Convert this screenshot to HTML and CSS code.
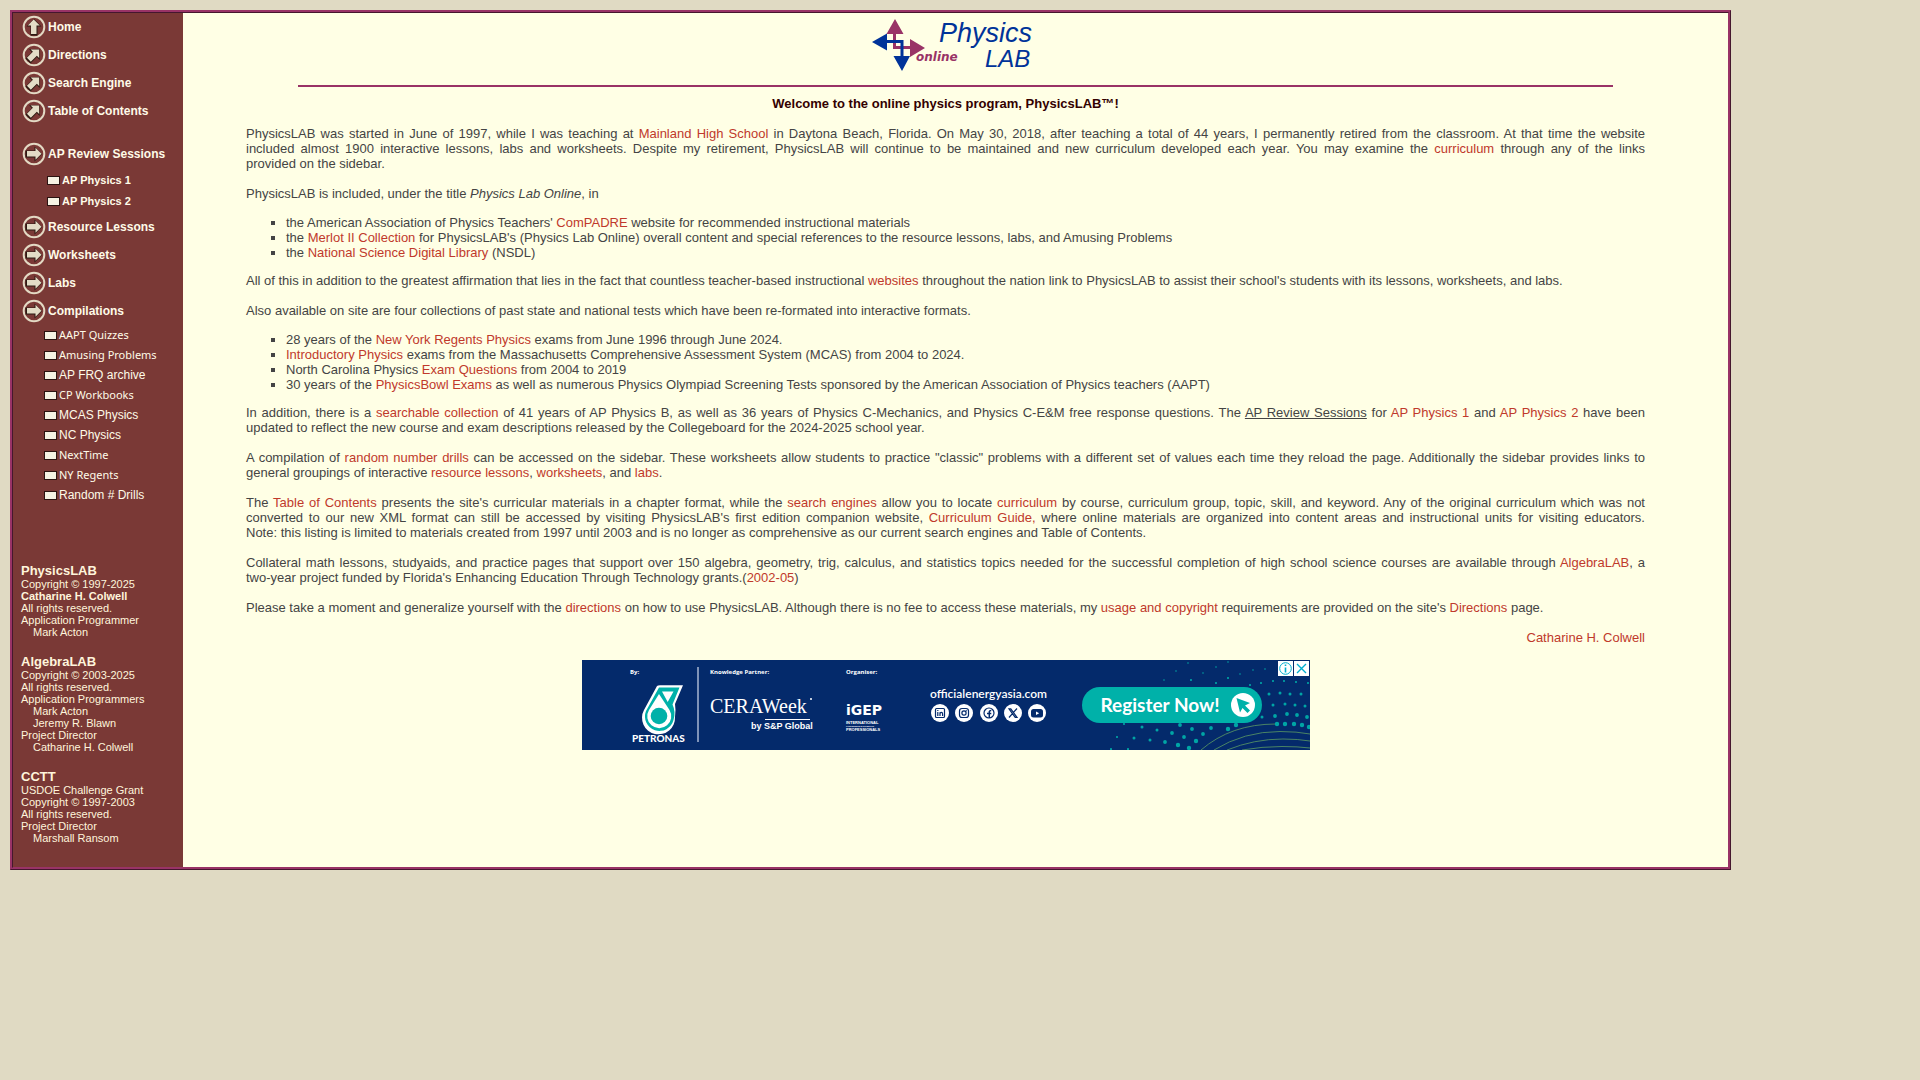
FILE: index.html
```html
<!DOCTYPE html>
<html lang="en">
<head>
<meta charset="utf-8">
<title>PhysicsLAB Online</title>
<link rel="stylesheet" href="styles.css">
</head>
<body>
<svg class="defs" width="0" height="0" aria-hidden="true">
  <symbol id="ring-arrow" viewBox="0 0 24 24">
    <path d="M3.500 8.500H12.500V4.500L20 12L12.500 19.500V15.500H3.500Z" fill="#2b1a12"/>
    <path d="M5 9H13.500V5.800L19.500 11.700L13.500 17.800V14.500H5Z" fill="#e3dcc6"/>
  </symbol>
</svg>
<div class="frame">
  <aside class="sidebar">
    <nav>
      <ul class="menu">
        <li><a href="#"><svg class="ico" viewBox="0 0 24 24"><circle cx="12" cy="12" r="10.300"/><use href="#ring-arrow" transform="rotate(-90 12 12)"/></svg>Home</a></li>
        <li><a href="#"><svg class="ico" viewBox="0 0 24 24"><circle cx="12" cy="12" r="10.300"/><use href="#ring-arrow" transform="rotate(-45 12 12)"/></svg>Directions</a></li>
        <li><a href="#"><svg class="ico" viewBox="0 0 24 24"><circle cx="12" cy="12" r="10.300"/><use href="#ring-arrow" transform="rotate(-45 12 12)"/></svg>Search Engine</a></li>
        <li><a href="#"><svg class="ico" viewBox="0 0 24 24"><circle cx="12" cy="12" r="10.300"/><use href="#ring-arrow" transform="rotate(-45 12 12)"/></svg>Table of Contents</a></li>
      </ul>
      <ul class="menu sections">
        <li><a href="#"><svg class="ico" viewBox="0 0 24 24"><circle cx="12" cy="12" r="10.300"/><use href="#ring-arrow"/></svg>AP Review Sessions</a>
          <ul class="sub courses">
            <li><a href="#">AP Physics 1</a></li>
            <li><a href="#">AP Physics 2</a></li>
          </ul>
        </li>
        <li><a href="#"><svg class="ico" viewBox="0 0 24 24"><circle cx="12" cy="12" r="10.300"/><use href="#ring-arrow"/></svg>Resource Lessons</a></li>
        <li><a href="#"><svg class="ico" viewBox="0 0 24 24"><circle cx="12" cy="12" r="10.300"/><use href="#ring-arrow"/></svg>Worksheets</a></li>
        <li><a href="#"><svg class="ico" viewBox="0 0 24 24"><circle cx="12" cy="12" r="10.300"/><use href="#ring-arrow"/></svg>Labs</a></li>
        <li><a href="#"><svg class="ico" viewBox="0 0 24 24"><circle cx="12" cy="12" r="10.300"/><use href="#ring-arrow"/></svg>Compilations</a>
          <ul class="sub">
            <li><a href="#">AAPT Quizzes</a></li>
            <li><a href="#">Amusing Problems</a></li>
            <li><a href="#" class="alt">AP FRQ archive</a></li>
            <li><a href="#">CP Workbooks</a></li>
            <li><a href="#" class="alt">MCAS Physics</a></li>
            <li><a href="#" class="alt">NC Physics</a></li>
            <li><a href="#">NextTime</a></li>
            <li><a href="#">NY Regents</a></li>
            <li><a href="#" class="alt">Random # Drills</a></li>
          </ul>
        </li>
      </ul>
    </nav>
    <div class="credits">
      <section>
        <h2>PhysicsLAB</h2>
        <p>Copyright © 1997-2025</p>
        <p><b>Catharine H. Colwell</b></p>
        <p>All rights reserved.</p>
        <p>Application Programmer</p>
        <p class="person">Mark Acton</p>
      </section>
      <section>
        <h2>AlgebraLAB</h2>
        <p>Copyright © 2003-2025</p>
        <p>All rights reserved.</p>
        <p>Application Programmers</p>
        <p class="person">Mark Acton</p>
        <p class="person">Jeremy R. Blawn</p>
        <p>Project Director</p>
        <p class="person">Catharine H. Colwell</p>
      </section>
      <section>
        <h2>CCTT</h2>
        <p>USDOE Challenge Grant</p>
        <p>Copyright © 1997-2003</p>
        <p>All rights reserved.</p>
        <p>Project Director</p>
        <p class="person">Marshall Ransom</p>
      </section>
    </div>
  </aside>
  <main>
    <header>
      <svg class="logo" viewBox="871 13 169 72" role="img" aria-label="PhysicsLAB online">
        <path d="M894.500 34V47.500H911" fill="none" stroke="#993366" stroke-width="3"/>
        <path d="M887 41.500H902V57" fill="none" stroke="#003399" stroke-width="3"/>
        <path d="M895 19L903.500 34H886.500ZM910 39L925 48L910 57Z" fill="#993366"/>
        <path d="M872 42L887 33.500V50.500ZM893.500 56H910L902 71Z" fill="#003399"/>
        <text x="939" y="42" class="logo-a">Physics</text>
        <text x="985" y="67" class="logo-b">LAB</text>
        <text x="916" y="61" class="logo-c">online</text>
      </svg>
      <hr>
    </header>
    <article>
      <h1>Welcome to the online physics program, PhysicsLAB™!</h1>
      <p>PhysicsLAB was started in June of 1997, while I was teaching at <a href="#">Mainland High School</a> in Daytona Beach, Florida. On May 30, 2018, after teaching a total of 44 years, I permanently retired from the classroom. At that time the website included&nbsp;almost 1900 interactive lessons, labs and worksheets. Despite my retirement, PhysicsLAB will continue to be maintained and new curriculum developed each year. You may examine the <a href="#">curriculum</a> through any of the links <span class="keep">provided on the sidebar.</span></p>
      <p>PhysicsLAB is included, under the title <i>Physics Lab Online</i>, in</p>
      <ul>
        <li>the American Association of Physics Teachers' <a href="#">ComPADRE</a> website for recommended instructional materials</li>
        <li>the <a href="#">Merlot II Collection</a> for PhysicsLAB's (Physics Lab Online) overall content and special references to the resource lessons, labs, and Amusing Problems</li>
        <li>the <a href="#">National Science Digital Library</a> (NSDL)</li>
      </ul>
      <p>All of this in addition to the greatest affirmation that lies in the fact that countless teacher-based instructional <a href="#">websites</a> throughout the nation link to PhysicsLAB to assist their school's students with its lessons, worksheets, and labs.</p>
      <p>Also available on site are four collections of past state and national tests which have been re-formated into interactive formats.</p>
      <ul>
        <li>28 years of the <a href="#">New York Regents Physics</a> exams from June 1996 through June 2024.</li>
        <li><a href="#">Introductory Physics</a> exams from the Massachusetts Comprehensive Assessment System (MCAS) from 2004 to 2024.</li>
        <li>North Carolina Physics <a href="#">Exam Questions</a> from 2004 to 2019</li>
        <li>30 years of the <a href="#">PhysicsBowl Exams</a> as well as numerous Physics Olympiad Screening Tests sponsored by the American Association of Physics teachers (AAPT)</li>
      </ul>
      <p>In addition, there is a <a href="#">searchable collection</a> of 41 years of AP Physics B, as well as 36 years of Physics C-Mechanics, and Physics C-E&amp;M free response questions. The <u>AP Review Sessions</u> for <a href="#">AP Physics 1</a> and <a href="#">AP Physics 2</a> have been updated to reflect the new course and exam descriptions released by the Collegeboard for the 2024-2025 school year.</p>
      <p>A compilation of <a href="#">random number drills</a> can be accessed on the sidebar. These worksheets allow students to practice "classic" problems with a different set of values each time they reload the page. Additionally the sidebar provides links to general groupings of interactive <a href="#">resource lessons</a>, <a href="#">worksheets</a>, and <a href="#">labs</a>.</p>
      <p>The <a href="#">Table of Contents</a> presents the site's curricular materials in a chapter format, while the <a href="#">search engines</a> allow you to locate <a href="#">curriculum</a> by course, curriculum group, topic, skill, and keyword. Any of the original curriculum which was not converted to our new XML format can still be accessed by visiting PhysicsLAB's first edition companion website, <a href="#">Curriculum Guide,</a> where online materials are organized into content areas and instructional units for visiting educators. <span class="keep">Note: this listing is limited</span> to materials created from 1997 until 2003 and is no longer as comprehensive as our current search engines and Table of Contents.</p>
      <p>Collateral math lessons, studyaids, and practice pages that support over 150 algebra, geometry, trig, calculus, and statistics topics needed for the successful completion of high school science courses are available through <a href="#">AlgebraLAB</a>, a <span class="keep">two-year project</span> funded by Florida's Enhancing Education Through Technology grants.(<a href="#">2002-05</a>)</p>
      <p>Please take a moment and generalize yourself with the <a href="#">directions</a> on how to use PhysicsLAB. Although there is no fee to access these materials, my <a href="#">usage and copyright</a> requirements are provided on the site's <a href="#">Directions</a> page.</p>
      <p class="signature"><a href="#">Catharine H. Colwell</a></p>
      <div class="ad">
        <svg class="ad-art" viewBox="0 0 728 90" role="img" aria-label="Energy Asia advertisement">
          <rect width="728" height="90" fill="#042a6b"/>
          <g fill="#fff">
            <g class="ad-tiny">
              <text x="48" y="14">By:</text>
              <text x="128" y="14">Knowledge Partner:</text>
              <text x="264" y="14">Organiser:</text>
            </g>
            <rect x="115" y="7" width="2" height="75" fill="#7f93b8"/>
            <path d="M75 26Q76 25 79 25.200H101L93 44Q94 50 93 57A16.500 16.500 0 1 1 62 50Z"/>
            <path d="M77 27.500H97.500L90.500 44.500Q94 52 91.500 60A14.500 14.500 0 1 1 64 51Z" fill="#00b1a9"/>
            <path d="M77 34L87.500 50A12 12 0 1 1 67 50ZM80 31.500H91.500L85.700 42Z"/>
            <circle cx="77" cy="56" r="8.300" fill="#00b1a9"/>
            <text x="50" y="82" class="ad-petronas">PETRONAS</text>
            <text x="128" y="53" class="ad-cera">CERAWeek</text>
            <circle cx="229" cy="39" r="1"/>
            <rect x="183" y="59" width="45" height="1"/>
            <text x="169" y="69" class="ad-sp">by S&amp;P Global</text>
            <text x="264" y="55" class="ad-igep">iGEP</text>
            <g class="ad-micro">
              <text x="264" y="64">INTERNATIONAL</text>
              <text x="264" y="71">PROFESSIONALS</text>
              <text x="264" y="67" class="ad-mid">CONFERENCE &amp; EXHIBITION</text>
            </g>
            <text x="348" y="38" class="ad-url">officialenergyasia.com</text>
            <circle cx="358" cy="53" r="9"/><circle cx="382" cy="53" r="9"/><circle cx="407" cy="53" r="9"/><circle cx="431" cy="53" r="9"/><circle cx="455" cy="53" r="9"/>
          </g>
          <g fill="none" stroke="#042a6b" stroke-width="1.200">
            <rect x="353.500" y="48.500" width="9" height="9" rx="1"/>
            <path d="M355.800 52V56M358 56V52.200M358 54Q358 52.300 359.300 52.300T360.600 54V56M355.800 50V51"/>
            <rect x="377.500" y="48.500" width="9" height="9" rx="2.500"/><circle cx="382" cy="53" r="2.100"/><path d="M384.300 50.300V51.300"/>
            <circle cx="407" cy="53" r="5"/>
            <path d="M407.300 58V51.800Q407.300 50.500 409.300 50.600M405 53.600H409.300" stroke-width="1.500"/>
            <path d="M427 48.800H428.800L435 57.300H433.200ZM435 48.500L431.700 52.200M430.200 53.800L427 57.500"/>
          </g>
          <rect x="449" y="49" width="12" height="8.500" rx="2.500" fill="#042a6b"/>
          <path d="M454 51.500L457.200 53.200L454 55Z" fill="#fff"/>
          <g fill="none" stroke="#5c9a63" stroke-width=".8">
            <path d="M619 90Q649 64 694 64"/>
            <path d="M632 90Q662 71.500 698 71.500Q715 71.500 728 74"/>
            <path d="M645 90Q672 79 701 79Q716 79 728 81"/>
            <path d="M660 90Q680 86.500 700 86.500Q716 86.500 728 88"/>
          </g>
          <g fill="none" stroke="#00a5a5" stroke-linecap="round">
            <path stroke-width="1.600" d="M606 3h0M634 7h0M646 2h0M594 11h0M621 13h0M658 14h0M582 20h0M671 10h0M683 9h0"/>
            <path stroke-width="2.200" d="M609 20h0M634 23h0M646 18h0M668 25h0M679 23h0M691 21h0M702 21h0M714 22h0M726 23h0M542 64h0M535 77h0M546 89h0M529 89h0"/>
            <path stroke-width="3" d="M687 34h0M698 33h0M708 34h0M719 34h0M691 45h0M703 44h0M713 45h0M723 46h0M680 57h0M560 67h0M575 70h0M552 78h0M568 80h0"/>
            <path stroke-width="3.800" d="M693 56h0M705 54h0M715 55h0M725 57h0M598 65h0M610 69h0M590 73h0M602 77h0M583 82h0M621 74h0M629 68h0"/>
            <path stroke-width="4.400" d="M614 81h0M596 85h0M607 88h0M646 69h0M654 65h0M695 64h0M703 64h0M712 64h0M720 65h0M727 67h0"/>
          </g>
        </svg>
        <a class="register" href="#">Register Now!
          <svg viewBox="0 0 24 24" width="24" height="24"><circle cx="12" cy="12" r="12" fill="#fff"/><path d="M5.500 5L19 10L14 12.500L19 17.500L16.500 20L11.500 15L9 19.500Z" fill="#00b1a9"/></svg>
        </a>
        <div class="ad-tools">
          <button type="button" aria-label="Ad information"><svg viewBox="0 0 15 15"><circle cx="7.500" cy="7.500" r="5.800"/><path d="M7.500 6.500V11.500M7.500 3.500V5" stroke-width="1.600"/></svg></button>
          <button type="button" aria-label="Close ad"><svg viewBox="0 0 15 15"><path d="M3 3L12 12M12 3L3 12" stroke-width="1.400"/></svg></button>
        </div>
      </div>
    </article>
  </main>
</div>
</body>
</html>
```
FILE: styles.css
```css
* { box-sizing: border-box; }

body {
  margin: 0;
  padding: 10px 0 10px 10px;
  background: #e0dac3;
  color: #444;
  font: 13px/15px "Liberation Sans", Arial, sans-serif;
}

ul, p, h1, h2 { margin: 0; padding: 0; }
a { color: #c0392b; text-decoration: none; }
.defs { position: absolute; }
.keep { white-space: nowrap; }

.frame {
  display: flex;
  width: calc(90% + 2px);
  border: 3px ridge #993366;
  background: #ffffe5;
}

/* Sidebar */
.sidebar {
  flex: 0 0 170px;
  padding-bottom: 23px;
  background: #7a3936;
  color: #fff5dc;
}
.sidebar ul { list-style: none; }
.sidebar a { color: #fffbe8; }
.menu > li > a {
  display: flex;
  align-items: center;
  gap: 2px;
  height: 28px;
  padding-left: 9px;
  font-size: 12px;
  font-weight: bold;
}
.sections { margin-top: 15px; }
.ico { width: 24px; height: 24px; flex: none; }
.ico circle { fill: none; stroke: #e3d9c4; stroke-width: 2; }

.sub a {
  display: flex;
  align-items: center;
  gap: 2px;
  height: 20px;
  padding-left: 31px;
  font: 11px/20px "Noto Sans", sans-serif;
}
.sub a::before {
  content: "";
  width: 11px;
  height: 7px;
  border: 1px solid #2b1412;
  background: #f6f3e4;
}
.sub .alt { font: 12px/20px "Liberation Sans", Arial, sans-serif; }
.courses { padding: 2px 0 1px; }
.courses a {
  height: 21px;
  padding-left: 34px;
  font: bold 11px/21px "Liberation Sans", Arial, sans-serif;
}

.credits {
  display: grid;
  gap: 16px;
  margin-top: 58px;
  padding-left: 8px;
  font-size: 11px;
  line-height: 12px;
}
.credits h2 { font-size: 13px; line-height: 15px; }
.credits .person { padding-left: 12px; }

/* Content */
main { flex: 1; min-width: 0; }
.logo { display: block; width: 169px; height: 72px; margin: 0 auto; }
.logo-a, .logo-b { font-style: italic; fill: #003399; }
.logo-a { font-size: 27px; }
.logo-b { font-size: 24px; }
.logo-c { font: italic bold 12px "DejaVu Sans", sans-serif; fill: #993366; }
hr {
  width: calc(85% + 2px);
  height: 2px;
  margin: 0 auto;
  border: 0;
  background: #993366;
}

article { padding: 9px 83px 0 63px; }
h1 {
  margin-bottom: 15px;
  color: #330000;
  font-size: 13px;
  line-height: 15px;
  text-align: center;
}
article p { margin-bottom: 15px; text-align: justify; }
article ul {
  margin: 0 0 13px;
  padding-left: 40px;
  list-style: square;
}
article p:has(+ ul) { margin-bottom: 14px; }
article .signature { text-align: right; }

/* Banner */
.ad { position: relative; width: 728px; max-width: 100%; margin: 0 auto; }
.ad-art { display: block; width: 100%; }
.ad-tiny { font: bold 6px "Open Sans", sans-serif; }
.ad-petronas { font: 900 10px Lato, sans-serif; }
.ad-cera { font: 20px "Liberation Serif", serif; }
.ad-sp { font: bold 9px "Liberation Sans", sans-serif; }
.ad-igep { font: bold 14px "DejaVu Sans", sans-serif; }
.ad-micro { font: bold 4px "Liberation Sans", sans-serif; }
.ad-mid { font-size: 2px; }
.ad-url { font: 600 12px Lato, sans-serif; }
.register {
  position: absolute;
  top: 27px;
  left: 500px;
  display: flex;
  align-items: center;
  justify-content: space-between;
  width: 180px;
  height: 36px;
  padding: 0 7px 0 19px;
  border-radius: 18px;
  background: #00b1a9;
  color: #fff;
  font: bold 19px/36px Lato, sans-serif;
}
.ad-tools { position: absolute; top: 1px; right: 1px; display: flex; gap: 1px; }
.ad-tools button {
  width: 15px;
  height: 15px;
  padding: 0;
  border: 0;
  background: #fff;
}
.ad-tools svg { display: block; fill: none; stroke: #00aecd; }
```
